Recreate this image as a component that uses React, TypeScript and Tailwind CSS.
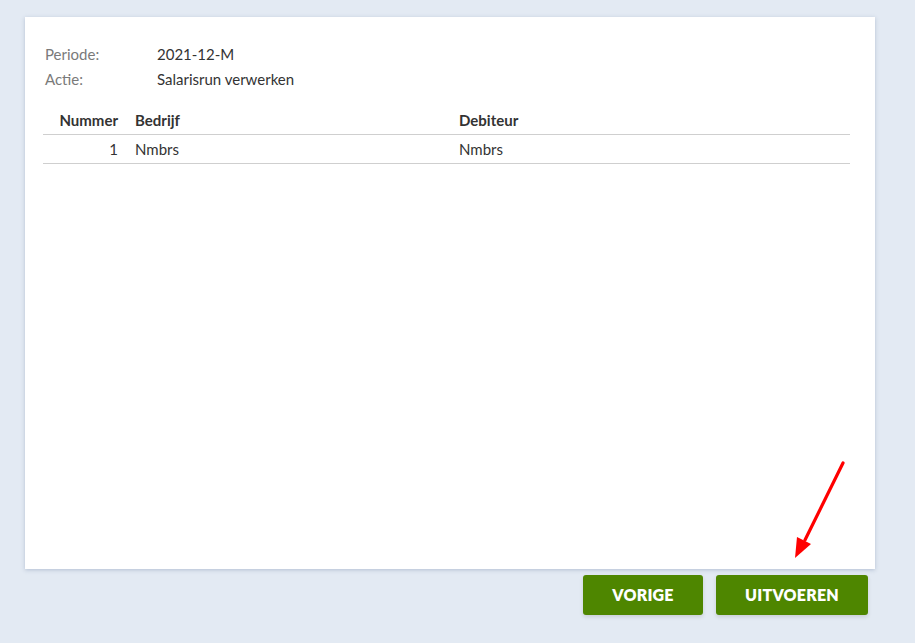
import React from "react";

const font = { fontFamily: '"Source Sans Pro", Lato, "Noto Sans", sans-serif' };

export default function App() {
  return (
    <div
      className="relative w-[915px] h-[643px] bg-[#e3eaf3] pt-[17px] pl-[25px] overflow-hidden"
      style={font}
    >
      <div className="w-[850px] h-[552px] bg-white shadow-[0_1px_4px_rgba(120,140,170,0.45)] pt-[28px] pl-[18px] pr-[25px]">
        <div className="grid grid-cols-[112px_1fr] gap-y-[6px] text-[15px] leading-[19px] pl-[2px]">
          <span className="text-[#7a7a7a]">Periode:</span>
          <span className="text-[#333]">2021-12-M</span>
          <span className="text-[#7a7a7a]">Actie:</span>
          <span className="text-[#333]">Salarisrun verwerken</span>
        </div>
        <div className="mt-[17px] text-[15px] text-[#333]">
          <div className="flex h-[29px] items-center border-b border-[#cfcfcf] font-bold">
            <div className="w-[75px] text-right">Nummer</div>
            <div className="w-[341px] pl-[17px]">Bedrijf</div>
            <div className="flex-1">Debiteur</div>
          </div>
          <div className="flex h-[29px] items-center border-b border-[#cfcfcf]">
            <div className="w-[75px] text-right">1</div>
            <div className="w-[341px] pl-[17px]">Nmbrs</div>
            <div className="flex-1">Nmbrs</div>
          </div>
        </div>
      </div>
      <div className="flex justify-end gap-[13px] w-[843px] mt-[6px]">
        <button className="w-[120px] h-[40px] rounded-[3px] bg-[#4e8600] text-white font-extrabold text-[16px] tracking-[0.2px] shadow-[0_2px_4px_rgba(0,0,0,0.12)]">
          VORIGE
        </button>
        <button className="w-[152px] h-[40px] rounded-[3px] bg-[#4e8600] text-white font-extrabold text-[16px] tracking-[0.2px] shadow-[0_2px_4px_rgba(0,0,0,0.12)]">
          UITVOEREN
        </button>
      </div>
      <svg
        className="absolute left-0 top-0 pointer-events-none"
        width="915"
        height="643"
        viewBox="0 0 915 643"
      >
        <line x1="843" y1="463" x2="805" y2="540" stroke="#ff0000" strokeWidth="3.2" strokeLinecap="round" />
        <polygon points="795,558 797,537 811,544" fill="#ff0000" />
      </svg>
    </div>
  );
}
